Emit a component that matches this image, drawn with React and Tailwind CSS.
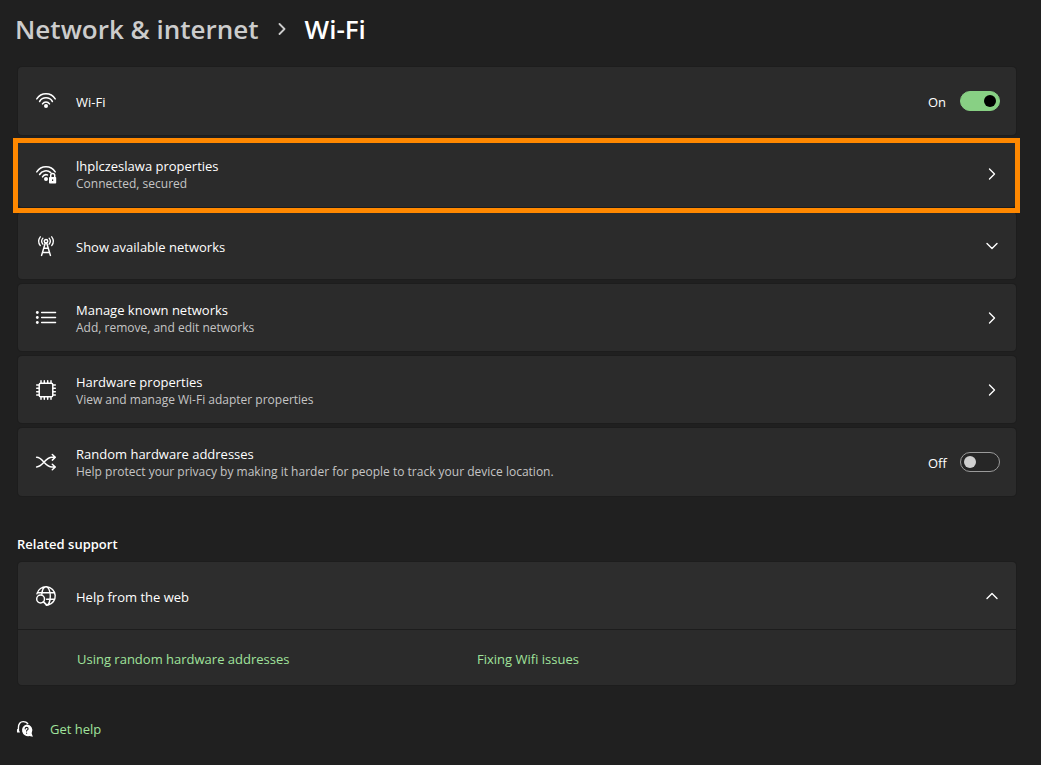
import { useState } from "react";

function Icon({ children, className = "size-5" }) {
  return (
    <svg
      viewBox="0 0 20 20"
      className={`${className} shrink-0 overflow-visible`}
      fill="none"
      stroke="currentColor"
      strokeWidth="1.5"
      strokeLinecap="round"
      strokeLinejoin="round"
      aria-hidden="true"
    >
      {children}
    </svg>
  );
}

function WifiIcon() {
  return (
    <Icon>
      <path d="M.8 7.9a10.9 10.9 0 0 1 18.400 0M3.600 10.500a7.400 7.400 0 0 1 12.800 0M6.500 12.900a4.200 4.200 0 0 1 7 0" />
      <circle cx="10" cy="15" r="2" fill="currentColor" stroke="none" />
    </Icon>
  );
}

function WifiLockIcon() {
  return (
    <Icon>
      <path d="M.8 7.900a10.900 10.900 0 0 1 18.400 0M3.600 10.500a7.400 7.400 0 0 1 11.200-1.900M6.500 12.900a4.200 4.200 0 0 1 5-2" />
      <circle cx="10" cy="15" r="2" fill="currentColor" stroke="none" />
      <path d="M14.700 13.600v-2.100a2 2 0 0 1 4 0v2.100" />
      <rect x="13" y="13" width="7.200" height="6.500" rx=".8" fill="currentColor" stroke="none" />
      <rect x="16" y="15.400" width="1.200" height="1.600" fill="#2b2b2b" stroke="none" />
    </Icon>
  );
}

function TowerIcon() {
  return (
    <Icon>
      <circle cx="10" cy="5.200" r="1.700" />
      <path d="M9.300 7 5.600 19.400M10.700 7l3.700 12.400M8.200 12.200h3.600M6.700 16.400h6.600" />
      <path
        d="M6.900 2.200a4.600 4.600 0 0 0 0 6M13.100 2.200a4.600 4.600 0 0 1 0 6M4.300.8a7.200 7.200 0 0 0 0 8.800M15.700.8a7.200 7.200 0 0 1 0 8.800"
        strokeWidth="1.300"
      />
    </Icon>
  );
}

function ListIcon() {
  return (
    <Icon>
      <path d="M5.600 4.500h14M5.600 9.500h14M5.600 14.500h14" strokeWidth="1.300" />
      <g fill="currentColor" stroke="none">
        <circle cx="1.300" cy="4.500" r="1.400" />
        <circle cx="1.300" cy="9.500" r="1.400" />
        <circle cx="1.300" cy="14.500" r="1.400" />
      </g>
    </Icon>
  );
}

function ChipIcon() {
  return (
    <Icon>
      <rect x="3.200" y="3.200" width="13.600" height="13.600" rx="1.600" />
      <path d="M5 3V.7M8.300 3V.7M11.700 3V.7M15 3V.7M5 19.300V17M8.300 19.300V17M11.700 19.300V17M15 19.300V17M3 5H.7M3 8.300H.7M3 11.700H.7M3 15H.7M19.300 5H17M19.300 8.300H17M19.300 11.700H17M19.300 15H17" />
    </Icon>
  );
}

function ShuffleIcon() {
  return (
    <Icon>
      <path d="M.6 5.300c6.400 0 8.200 9.700 15.400 9.700h3.200M.6 15c6.400 0 8.200-9.700 15.400-9.700h3.200M16.300 2.500l3 2.800-3 2.800M16.300 12.200l3 2.800-3 2.800" />
    </Icon>
  );
}

function GlobeSearchIcon() {
  return (
    <Icon>
      <path
        d="M.9 7.800a9.300 9.300 0 1 1 11.200 11.300M1.300 6.800h17.400M10.600 13.300h8.100M5.800 8.200C6.200 3.800 7.900.7 10 .7c2.400 0 4.300 4.200 4.300 9.300s-1.700 9-3.900 9.300"
        strokeWidth="1.400"
      />
      <circle cx="4.600" cy="13" r="3.900" />
      <path d="m7.500 15.900 3.300 3.300" strokeWidth="1.700" />
    </Icon>
  );
}

function GetHelpIcon() {
  return (
    <Icon className="size-4">
      <path
        d="M1.800 13.500V8.200C1.800 3.600 4 .8 7.800.8c2.600 0 4.400.8 5.600 2.300M.8 10.800v2.800h2"
        strokeWidth="1.700"
      />
      <path
        d="M12 4.300a7.300 7.300 0 0 1 6.300 11l1.500 4.500-4.400-1A7.300 7.300 0 1 1 12 4.300Z"
        fill="currentColor"
        stroke="none"
      />
      <path
        d="M10.200 9.800c0-2.500 3.700-2.300 3.700-.2 0 1.600-1.900 1.500-1.900 3M12 15.100v.1"
        stroke="#202020"
        strokeWidth="1.400"
      />
    </Icon>
  );
}

const chevronPaths = {
  right: "M3.500 1l5 5-5 5",
  down: "M1 3.500l5 5 5-5",
  up: "M1 8.500l5-5 5 5",
};

function Chevron({ direction, className = "size-3", strokeWidth = 1.4 }) {
  return (
    <svg
      viewBox="0 0 12 12"
      className={`${className} shrink-0`}
      fill="none"
      stroke="currentColor"
      strokeWidth={strokeWidth}
      strokeLinecap="round"
      strokeLinejoin="round"
      aria-hidden="true"
    >
      <path d={chevronPaths[direction]} />
    </svg>
  );
}

function RowText({ title, detail }) {
  return (
    <span className="min-w-0 flex-1 pt-0.5">
      <span className="block text-[13px] leading-[18px]">{title}</span>
      {detail && <span className="block text-[12px] leading-[18px] text-[#c5c5c5]">{detail}</span>}
    </span>
  );
}

function ToggleRow({ id, icon, title, detail, defaultOn }) {
  const [on, setOn] = useState(defaultOn);
  return (
    <label
      htmlFor={id}
      className="flex min-h-[68px] items-center gap-5 rounded bg-[#2b2b2b] pr-4 pl-[18px] shadow-[0_0_0_1px_#1d1d1d]"
    >
      {icon}
      <RowText title={title} detail={detail} />
      <span className="flex items-center gap-3">
        <span className="w-5 pt-0.5 text-[13px] leading-[18px]">{on ? "On" : "Off"}</span>
        <input
          id={id}
          type="checkbox"
          role="switch"
          checked={on}
          onChange={(e) => setOn(e.target.checked)}
          className="flex h-5 w-10 appearance-none items-center rounded-full border border-[#9a9a9a] bg-[#262626] px-[3px] before:size-3 before:rounded-full before:bg-[#cfcfcf] checked:justify-end checked:border-[#88d084] checked:bg-[#88d084] checked:before:bg-black"
        />
      </span>
    </label>
  );
}

function LinkRow({ icon, title, detail, direction = "right", highlighted }) {
  return (
    <div className="relative">
      <button
        type="button"
        className="flex min-h-[67px] w-full items-center gap-5 rounded bg-[#2b2b2b] px-[18px] text-left shadow-[0_0_0_1px_#1d1d1d]"
      >
        {icon}
        <RowText title={title} detail={detail} />
        <Chevron direction={direction} />
      </button>
      {highlighted && (
        <span className="pointer-events-none absolute -top-0.5 -right-1 -bottom-1.5 -left-[5px] z-10 border-[5px] border-[#ff8800]" />
      )}
    </div>
  );
}

export default function App() {
  return (
    <main className="min-h-screen bg-[#202020] pr-[25px] pl-[18px] font-['Open_Sans','Noto_Sans',sans-serif] text-white">
      <header className="-ml-[3px] flex h-[67px] items-center pb-2.5">
        <h1 className="flex items-center text-[26px] leading-9 font-semibold">
          <a href="#network" className="text-[#cccccc]">
            Network &amp; internet
          </a>
          <Chevron
            direction="right"
            className="mx-[17px] size-3 text-[#cccccc]"
            strokeWidth={1.8}
          />
          <span>Wi-Fi</span>
        </h1>
      </header>

      <section className="flex flex-col gap-[5px]">
        <ToggleRow id="wifi" icon={<WifiIcon />} title="Wi-Fi" defaultOn={true} />
        <LinkRow
          icon={<WifiLockIcon />}
          title="lhplczeslawa properties"
          detail="Connected, secured"
          highlighted
        />
        <LinkRow icon={<TowerIcon />} title="Show available networks" direction="down" />
        <LinkRow
          icon={<ListIcon />}
          title="Manage known networks"
          detail="Add, remove, and edit networks"
        />
        <LinkRow
          icon={<ChipIcon />}
          title="Hardware properties"
          detail="View and manage Wi-Fi adapter properties"
        />
        <ToggleRow
          id="random-addresses"
          icon={<ShuffleIcon />}
          title="Random hardware addresses"
          detail="Help protect your privacy by making it harder for people to track your device location."
          defaultOn={false}
        />
      </section>

      <section className="pt-[38px]">
        <h2 className="-ml-px text-[13px] leading-5 font-semibold">Related support</h2>
        <div className="mt-2 overflow-hidden rounded shadow-[0_0_0_1px_#1d1d1d]">
          <button
            type="button"
            aria-expanded="true"
            className="flex min-h-[67px] w-full items-center gap-5 bg-[#2d2d2d] px-[18px] text-left"
          >
            <GlobeSearchIcon />
            <RowText title="Help from the web" />
            <Chevron direction="up" />
          </button>
          <div className="flex min-h-14 items-center border-t border-[#1d1d1d] bg-[#2b2b2b] pt-0.5 pl-[59px] text-[13px] leading-[18px] text-[#a0e39c]">
            <span className="w-[400px]">
              <a href="#random">Using random hardware addresses</a>
            </span>
            <a href="#fixing">Fixing Wifi issues</a>
          </div>
        </div>
      </section>

      <footer className="-ml-px flex items-center gap-[17px] pt-[35px] text-[13px] leading-[18px]">
        <GetHelpIcon />
        <a href="#help" className="text-[#a0e39c]">
          Get help
        </a>
      </footer>
    </main>
  );
}
